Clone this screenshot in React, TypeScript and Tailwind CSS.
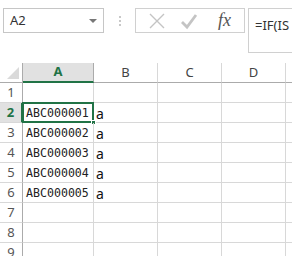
import React from 'react'

const rows = [
  { n: 1, a: '', b: '' },
  { n: 2, a: 'ABC000001', b: 'a' },
  { n: 3, a: 'ABC000002', b: 'a' },
  { n: 4, a: 'ABC000003', b: 'a' },
  { n: 5, a: 'ABC000004', b: 'a' },
  { n: 6, a: 'ABC000005', b: 'a' },
  { n: 7, a: '', b: '' },
  { n: 8, a: '', b: '' },
  { n: 9, a: '', b: '' },
]

const ui = { fontFamily: '"Noto Sans", "Open Sans", sans-serif' }

const FormulaBar = () => (
  <div className="flex h-[63px] items-start pt-[8px] bg-white">
    <div className="ml-[3px] flex h-[25px] w-[101px] items-center justify-between border border-[#c6c6c6] pl-[6px] pr-[6px]">
      <span className="text-[13px] text-[#333]" style={ui}>A2</span>
      <span className="h-0 w-0 border-x-[4px] border-t-[4px] border-x-transparent border-t-[#777]" />
    </div>
    <div className="ml-[15px] flex h-[25px] flex-col items-center justify-center gap-[2px]">
      <span className="h-[2px] w-[2px] bg-[#c8c8c8]" />
      <span className="h-[2px] w-[2px] bg-[#c8c8c8]" />
      <span className="h-[2px] w-[2px] bg-[#c8c8c8]" />
    </div>
    <div className="ml-[14px] flex h-[25px] w-[110px] items-center border border-[#d0d0d0]">
      <svg width="18" height="18" viewBox="0 0 18 18" className="ml-[12px]">
        <path d="M2 2 L16 16 M16 2 L2 16" stroke="#c4c4c4" strokeWidth="1.4" fill="none" />
      </svg>
      <svg width="18" height="18" viewBox="0 0 18 18" className="ml-[14px]">
        <path d="M2 10 L7 15 L16 3" stroke="#c4c4c4" strokeWidth="2.8" fill="none" />
      </svg>
      <span
        className="ml-[20px] text-[18px] italic text-[#555]"
        style={{ fontFamily: '"Liberation Serif", "DejaVu Serif", serif' }}
      >
        fx
      </span>
    </div>
    <div className="ml-[3px] h-[45px] flex-1 border border-r-0 border-[#d0d0d0] pl-[6px] pt-[3px]">
      <span className="text-[13px] text-[#333]" style={ui}>=IF(IS</span>
    </div>
  </div>
)

const Sheet = () => (
  <div className="grid grid-cols-[23px_71px_64px_64px_64px_1fr]" style={ui}>
    <div className="relative h-[20px] border-b border-r border-[#ababab] bg-white">
      <span className="absolute bottom-[3px] right-[3px] h-0 w-0 border-b-[12px] border-l-[12px] border-b-[#dadada] border-l-transparent" />
    </div>
    <div className="flex h-[20px] items-center justify-center border-b-2 border-r border-b-[#217346] border-r-[#ababab] bg-[#e1e1e1] text-[13px] font-bold text-[#217346]">
      A
    </div>
    {['B', 'C', 'D'].map((c) => (
      <div
        key={c}
        className="flex h-[20px] items-center justify-center border-b border-r border-b-[#ababab] border-r-[#d8d8d8] bg-white text-[13px] text-[#444]"
      >
        {c}
      </div>
    ))}
    <div className="h-[20px] border-b border-[#ababab] bg-white" />
    {rows.map((r) => {
      const sel = r.n === 2
      return (
        <React.Fragment key={r.n}>
          <div
            className={
              sel
                ? 'flex h-[20px] items-center justify-center border-b border-r-2 border-b-[#d8d8d8] border-r-[#217346] bg-[#e1e1e1] text-[13px] font-bold text-[#217346]'
                : 'flex h-[20px] items-center justify-center border-b border-r border-b-[#d8d8d8] border-r-[#ababab] bg-white text-[13px] text-[#555]'
            }
          >
            {r.n}
          </div>
          <div className="relative flex h-[20px] items-center border-b border-r border-[#d8d8d8] pl-[3px] pt-[2px] text-[11.6px] text-[#222]">
            <span style={{ fontFamily: '"DejaVu Sans Mono", "Liberation Mono", monospace' }}>{r.a}</span>
            {sel && (
              <>
                <span className="absolute -left-px -top-px bottom-[-1px] right-[-1px] border-2 border-[#217346]" />
                <span className="absolute bottom-[-3px] right-[-3px] h-[5px] w-[5px] border border-white bg-[#217346]" />
              </>
            )}
          </div>
          <div className="flex h-[20px] items-center border-b border-r border-[#d8d8d8] pl-[2px] pt-[1px] text-[14px] text-[#111]">
            {r.b}
          </div>
          <div className="h-[20px] border-b border-r border-[#d8d8d8]" />
          <div className="h-[20px] border-b border-r border-[#d8d8d8]" />
          <div className="h-[20px] border-b border-[#d8d8d8]" />
        </React.Fragment>
      )
    })}
  </div>
)

export default function App() {
  return (
    <div className="h-[256px] w-[292px] overflow-hidden bg-white">
      <FormulaBar />
      <Sheet />
    </div>
  )
}
